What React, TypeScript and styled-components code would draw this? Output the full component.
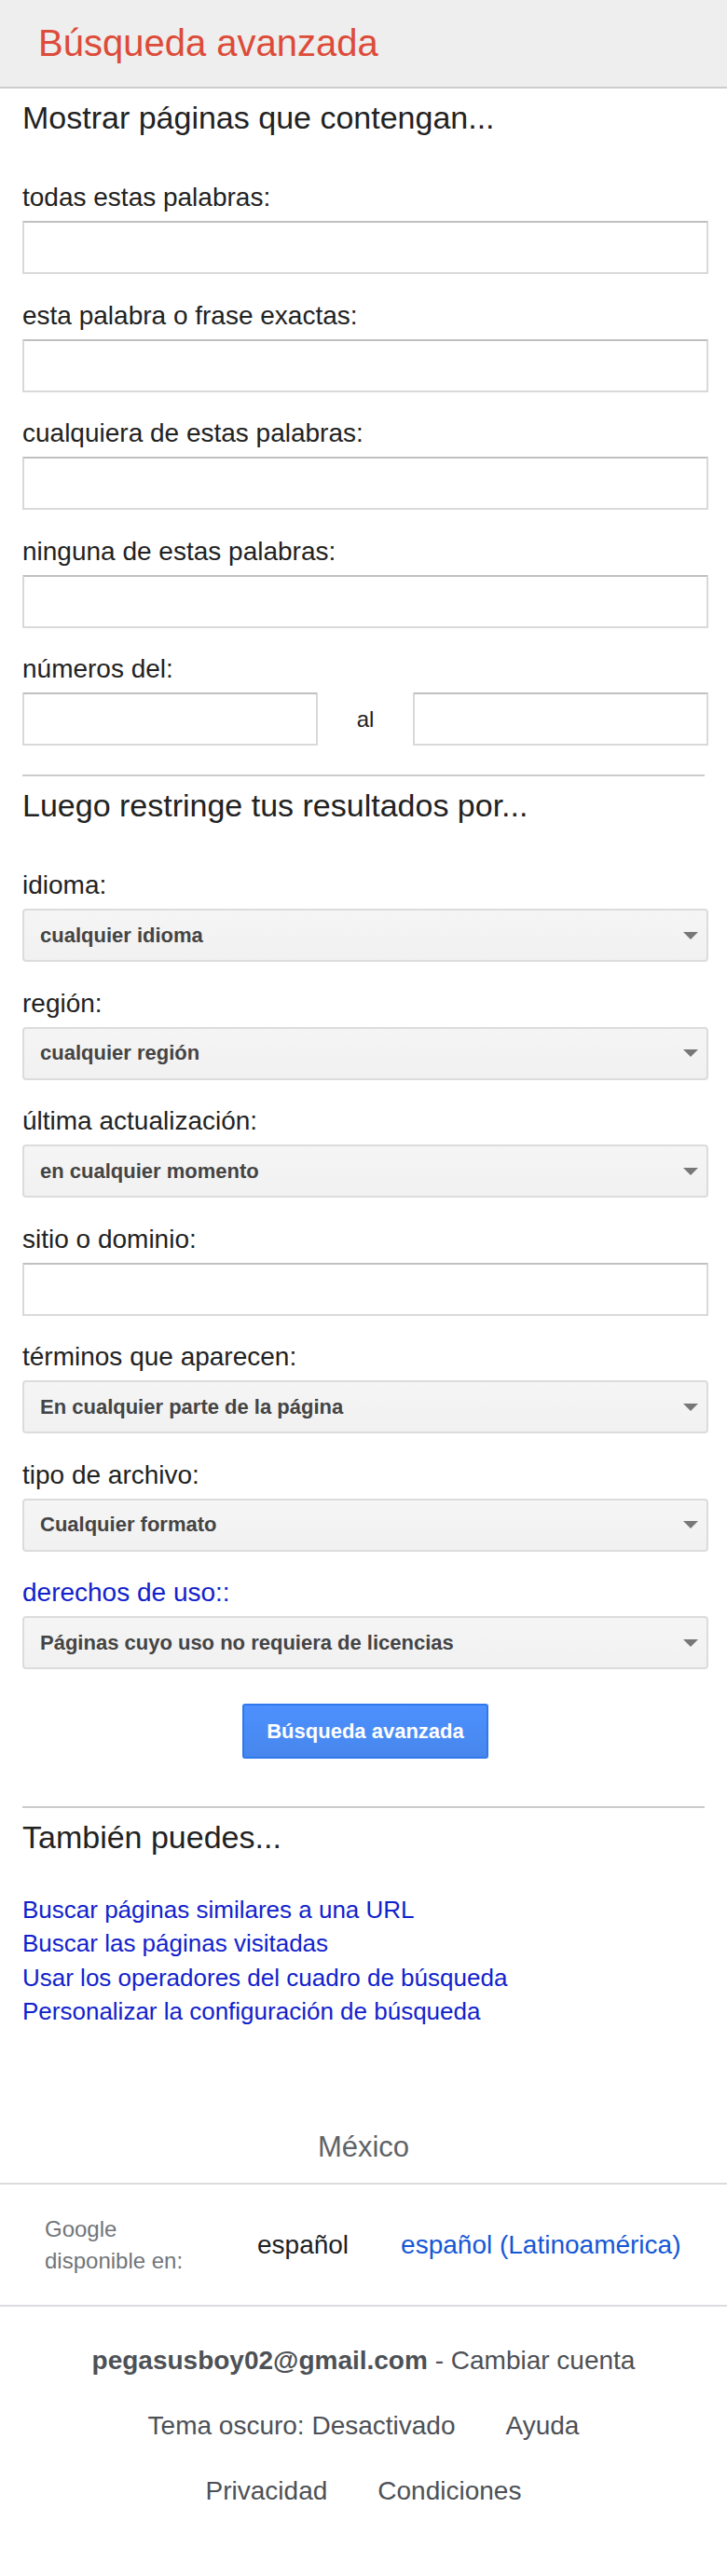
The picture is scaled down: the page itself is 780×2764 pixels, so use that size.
import React from "react";
import styled, { createGlobalStyle } from "styled-components";

const GlobalStyle = createGlobalStyle`
  body {
    margin: 0;
    background: #fff;
    font-family: "Liberation Sans", Arial, sans-serif;
  }
  * { box-sizing: border-box; }
`;

const Page = styled.div`
  min-height: 2764px;
  background: #fff;
`;

const Header = styled.header`
  height: 95px;
  background: #eeeeee;
  border-bottom: 2px solid #cccccc;
  display: flex;
  align-items: center;
  padding-left: 41px;
`;

const Title = styled.h1`
  margin: 0;
  font-size: 40px;
  font-weight: normal;
  color: #dd4b39;
`;

const Main = styled.div`
  padding: 0 20px 0 24px;
`;

const SectionTitle = styled.h2<{ $after?: number }>`
  margin: 11px 0 ${({ $after }) => $after ?? 50}px;
  font-size: 34px;
  line-height: 40px;
  font-weight: normal;
  color: #222;
`;

const Field = styled.div`
  margin-bottom: 28.5px;
`;

const Label = styled.label<{ $link?: boolean }>`
  display: block;
  font-size: 28px;
  line-height: 32px;
  margin-bottom: 9px;
  color: ${({ $link }) => ($link ? "#1122cc" : "#222")};
`;

const TextInput = styled.input`
  display: block;
  width: 100%;
  height: 57px;
  border: 2px solid #d9d9d9;
  border-top-color: #c0c0c0;
  border-radius: 1px;
  background: #fff;
  outline: none;
`;

const RangeRow = styled.div`
  display: grid;
  grid-template-columns: 1fr 102px 1fr;
  align-items: center;
`;

const RangeSep = styled.span`
  text-align: center;
  font-size: 24px;
  color: #222;
`;

const SelectBox = styled.div`
  height: 57px;
  display: flex;
  align-items: center;
  justify-content: space-between;
  padding: 0 9px 0 17px;
  border: 2px solid #dcdcdc;
  border-radius: 4px;
  background: linear-gradient(#f5f5f5, #f1f1f1);
  font-size: 22px;
  font-weight: bold;
  color: #444;
`;

const Divider = styled.hr<{ $top?: number }>`
  margin: ${({ $top }) => $top ?? 0}px 4px 0 0;
  border: 0;
  height: 2px;
  background: #cccccc;
`;

const ButtonRow = styled.div`
  display: flex;
  justify-content: center;
  margin: 37px 0 51px;
`;

const SubmitButton = styled.button`
  width: 264px;
  height: 59px;
  border: 2px solid #3079ed;
  border-radius: 3px;
  background: linear-gradient(#4d90fe, #4787ed);
  color: #fff;
  font-family: inherit;
  font-size: 22px;
  font-weight: bold;
  cursor: pointer;
`;

const LinkList = styled.div`
  display: flex;
  flex-direction: column;
  align-items: flex-start;
`;

const TextLink = styled.a`
  font-size: 26px;
  line-height: 36.3px;
  color: #1122cc;
  text-decoration: none;
`;

const Country = styled.div`
  margin-top: 110px;
  padding-bottom: 20px;
  text-align: center;
  font-size: 31px;
  line-height: 36px;
  color: #5f6368;
`;

const LangBar = styled.div`
  height: 133px;
  display: flex;
  align-items: center;
  padding-left: 48px;
  border-top: 2px solid #dadce0;
  border-bottom: 2px solid #dadce0;
`;

const LangLabel = styled.div`
  width: 160px;
  margin-right: 40px;
  font-size: 24px;
  line-height: 34px;
  color: #70757a;
`;

const LangLink = styled.a<{ $current?: boolean }>`
  padding: 0 28px;
  font-size: 28px;
  line-height: 34px;
  color: ${({ $current }) => ($current ? "#202124" : "#1558d6")};
  text-decoration: none;
`;

const Account = styled.div`
  padding-top: 41px;
  display: flex;
  flex-direction: column;
  gap: 36px;
  font-size: 28px;
  line-height: 34px;
  color: #4d5156;
`;

const FootRow = styled.div`
  display: flex;
  justify-content: center;
  gap: 54px;
`;

const Email = styled.b`
  font-weight: bold;
`;

const Arrow = () => (
  <svg width="16" height="8" viewBox="0 0 16 8">
    <polygon points="0,0 16,0 8,8" fill="#777" />
  </svg>
);

const Select = ({ value }: { value: string }) => (
  <SelectBox>
    <span>{value}</span>
    <Arrow />
  </SelectBox>
);

const textFields = [
  "todas estas palabras:",
  "esta palabra o frase exactas:",
  "cualquiera de estas palabras:",
  "ninguna de estas palabras:",
];

const links = [
  "Buscar páginas similares a una URL",
  "Buscar las páginas visitadas",
  "Usar los operadores del cuadro de búsqueda",
  "Personalizar la configuración de búsqueda",
];

export default function App() {
  return (
    <Page>
      <GlobalStyle />
      <Header>
        <Title>Búsqueda avanzada</Title>
      </Header>

      <Main>
        <SectionTitle>Mostrar páginas que contengan...</SectionTitle>
        {textFields.map((label) => (
          <Field key={label}>
            <Label>{label}</Label>
            <TextInput type="text" />
          </Field>
        ))}
        <Field>
          <Label>números del:</Label>
          <RangeRow>
            <TextInput type="text" />
            <RangeSep>al</RangeSep>
            <TextInput type="text" />
          </RangeRow>
        </Field>

        <Divider $top={31} />
        <SectionTitle>Luego restringe tus resultados por...</SectionTitle>

        <Field>
          <Label>idioma:</Label>
          <Select value="cualquier idioma" />
        </Field>
        <Field>
          <Label>región:</Label>
          <Select value="cualquier región" />
        </Field>
        <Field>
          <Label>última actualización:</Label>
          <Select value="en cualquier momento" />
        </Field>
        <Field>
          <Label>sitio o dominio:</Label>
          <TextInput type="text" />
        </Field>
        <Field>
          <Label>términos que aparecen:</Label>
          <Select value="En cualquier parte de la página" />
        </Field>
        <Field>
          <Label>tipo de archivo:</Label>
          <Select value="Cualquier formato" />
        </Field>
        <Field>
          <Label $link>derechos de uso::</Label>
          <Select value="Páginas cuyo uso no requiera de licencias" />
        </Field>

        <ButtonRow>
          <SubmitButton>Búsqueda avanzada</SubmitButton>
        </ButtonRow>

        <Divider />
        <SectionTitle $after={40}>También puedes...</SectionTitle>
        <LinkList>
          {links.map((l) => (
            <TextLink key={l} href="#">
              {l}
            </TextLink>
          ))}
        </LinkList>
      </Main>

      <Country>México</Country>
      <LangBar>
        <LangLabel>Google disponible en:</LangLabel>
        <LangLink $current>español</LangLink>
        <LangLink href="#">español (Latinoamérica)</LangLink>
      </LangBar>

      <Account>
        <FootRow>
          <span>
            <Email>pegasusboy02@gmail.com</Email> - Cambiar cuenta
          </span>
        </FootRow>
        <FootRow>
          <span>Tema oscuro: Desactivado</span>
          <span>Ayuda</span>
        </FootRow>
        <FootRow>
          <span>Privacidad</span>
          <span>Condiciones</span>
        </FootRow>
      </Account>
    </Page>
  );
}
